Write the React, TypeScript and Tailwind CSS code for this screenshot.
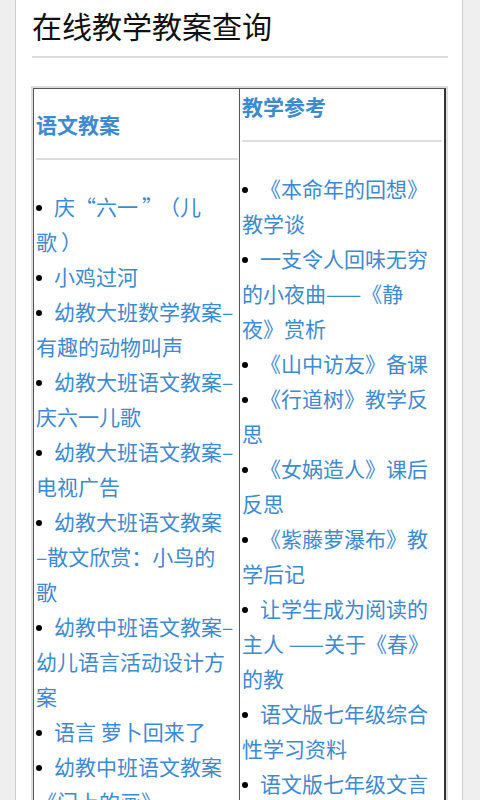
import React from "react";

const LINK = "text-[#3d8ad0]";

function Item({ lines }: { lines: React.ReactNode[] }) {
  return (
    <div className={`leading-[35px] text-[21px] ${LINK} whitespace-nowrap`}>
      {lines.map((l, i) => (
        <React.Fragment key={i}>
          {i === 0 && (
            <span className="inline-block w-[6px] h-[6px] rounded-full bg-black align-middle mr-[12px] relative top-[-1px]" />
          )}
          {l}
          {i < lines.length - 1 && <br />}
        </React.Fragment>
      ))}
    </div>
  );
}

const R = ({ c }: { c: string }) => <span className="inline-block w-[21px] text-right">{c}</span>;
const L = ({ c }: { c: string }) => <span className="inline-block w-[21px] text-left pl-[4px]">{c}</span>;

const left: React.ReactNode[][] = [
  [
    <>庆<R c="“" />六一<L c="”" /><R c="（" />儿</>,
    <>歌<L c="）" /></>,
  ],
  ["小鸡过河"],
  ["幼教大班数学教案–", "有趣的动物叫声"],
  ["幼教大班语文教案–", "庆六一儿歌"],
  ["幼教大班语文教案–", "电视广告"],
  ["幼教大班语文教案", "–散文欣赏：小鸟的", "歌"],
  ["幼教中班语文教案–", "幼儿语言活动设计方", "案"],
  ["语言 萝卜回来了"],
  ["幼教中班语文教案", "《门上的画》"],
  ["幼教中班语文教案–", "小鸟的歌"],
];

const right: React.ReactNode[][] = [
  ["《本命年的回想》", "教学谈"],
  ["一支令人回味无穷", "的小夜曲——《静", "夜》赏析"],
  ["《山中访友》备课"],
  ["《行道树》教学反", "思"],
  ["《女娲造人》课后", "反思"],
  ["《紫藤萝瀑布》教", "学后记"],
  ["让学生成为阅读的", "主人 ——关于《春》", "的教"],
  ["语文版七年级综合", "性学习资料"],
  ["语文版七年级文言", "文练习"],
  ["《散步》教学反思"],
];

export default function App() {
  return (
    <div
      className="w-[480px] h-[800px] overflow-hidden bg-[#efefef]"
      style={{ fontFamily: '"Noto Sans CJK SC", "Noto Sans", sans-serif' }}
    >
      <div className="ml-[15px] w-[448px] h-full bg-white border-x border-[#cccccc] pl-[16px] pr-[14px]">
        <div className="pt-[7px] text-[30px] leading-[36px] text-[#111111]">在线教学教案查询</div>
        <div className="mt-[13px] h-[2px] bg-[#dddddd]" />
        <div className="mt-[28px] -ml-px w-[417px] border-2 border-[#dddddd]">
          <div className="flex">
            <div className="w-[206px] border-l border-t border-[#555555] pl-[2px] pr-[1px] pt-[18px]">
              <div className={`text-[21px] font-bold leading-[35px] ${LINK}`}>语文教案</div>
              <div className="mt-[16px] h-[2px] bg-[#dddddd]" />
              <div className="mt-[29px]">
                {left.map((l, i) => (
                  <Item key={i} lines={l} />
                ))}
              </div>
            </div>
            <div className="flex-1 border-l border-t border-r-2 border-l-[#555555] border-t-[#555555] border-r-[#333333] px-[2px]">
              <div className={`text-[21px] font-bold leading-[35px] ${LINK}`}>教学参考</div>
              <div className="mt-[16px] h-[2px] bg-[#dddddd]" />
              <div className="mt-[29px]">
                {right.map((l, i) => (
                  <Item key={i} lines={l} />
                ))}
              </div>
            </div>
          </div>
        </div>
      </div>
    </div>
  );
}
